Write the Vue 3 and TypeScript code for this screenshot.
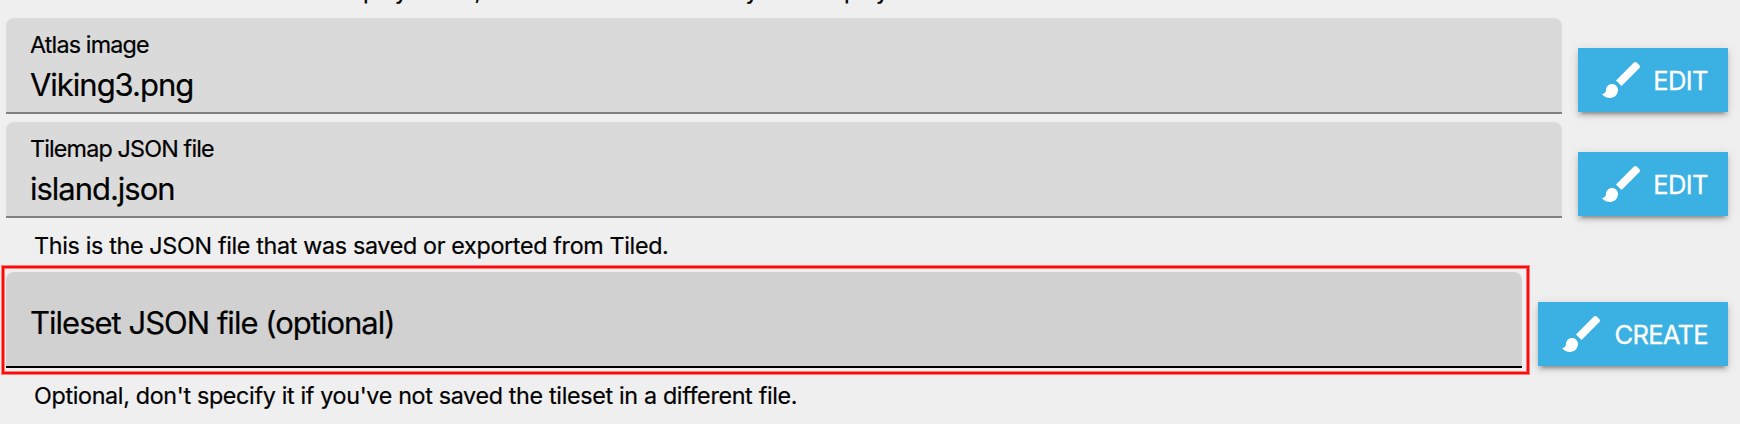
<script setup lang="ts">
interface Field {
  id: string
  label: string
  value: string
  helper: string
  action: string
}

const fields: Field[] = [
  { id: 'atlas', label: 'Atlas image', value: 'Viking3.png', helper: '', action: 'EDIT' },
  {
    id: 'tilemap',
    label: 'Tilemap JSON file',
    value: 'island.json',
    helper: 'This is the JSON file that was saved or exported from Tiled.',
    action: 'EDIT',
  },
  {
    id: 'tileset',
    label: 'Tileset JSON file (optional)',
    value: '',
    helper: "Optional, don't specify it if you've not saved the tileset in a different file.",
    action: 'CREATE',
  },
]
</script>

<template>
  <main class="panel">
    <p class="intro"><span>If "index" is selected as the display mode, this is the index of the layer to display.</span></p>
    <section v-for="f in fields" :key="f.id" class="group" :class="f.id">
      <div class="row">
        <div class="field" :class="{ empty: !f.value }">
          <template v-if="f.value">
            <div class="label">{{ f.label }}</div>
            <div class="value">{{ f.value }}</div>
          </template>
          <div v-else class="placeholder">{{ f.label }}</div>
        </div>
        <button class="action" type="button">
          <svg class="icon" viewBox="0 0 24 24" aria-hidden="true">
            <path d="M7 14c-1.66 0-3 1.34-3 3 0 1.31-1.16 2-2 2 .92 1.22 2.49 2 4 2 2.21 0 4-1.79 4-4 0-1.66-1.34-3-3-3zm13.71-9.37l-1.34-1.34c-.39-.39-1.02-.39-1.41 0L9 12.25 11.75 15l8.96-8.96c.39-.39.39-1.02 0-1.41z" />
          </svg>
          <span class="caption">{{ f.action }}</span>
        </button>
      </div>
      <p v-if="f.helper" class="helper">{{ f.helper }}</p>
    </section>
  </main>
</template>

<style>
body {
  margin: 0;
  background: #efefef;
}
</style>

<style scoped>
.panel {
  display: flex;
  flex-direction: column;
  box-sizing: border-box;
  width: 1740px;
  height: 424px;
  overflow: hidden;
  padding: 0 12px 0 6px;
  background: #efefef;
  color: #000;
  font-family: Inter, "Liberation Sans", sans-serif;
  -webkit-text-stroke: 0.2px currentColor;
}
p {
  margin: 0;
}
.intro {
  display: flex;
  align-items: flex-end;
  flex: none;
  box-sizing: border-box;
  height: 18px;
  padding: 0 0 12px 28px;
  font-size: 23.3px;
  line-height: 30px;
  letter-spacing: -0.32px;
  white-space: nowrap;
}
.row {
  display: flex;
  align-items: flex-start;
  gap: 16px;
}
.atlas {
  margin-bottom: 8px;
}
.field {
  box-sizing: border-box;
  flex: 1;
  height: 96px;
  padding: 12px 24px 0;
  background: #dadada;
  border-bottom: 2px solid #808080;
  border-radius: 8px 8px 0 0;
  white-space: nowrap;
}
.label {
  font-size: 23.3px;
  line-height: 30px;
  letter-spacing: -0.83px;
}
.value,
.placeholder {
  font-size: 31px;
  line-height: 40px;
  letter-spacing: -1.02px;
}
.value {
  margin-top: 5px;
}
.placeholder {
  letter-spacing: -0.99px;
}
.field.empty {
  position: relative;
  padding-top: 31px;
  background: #d1d1d1;
  border-bottom-color: #000;
}
.field.empty::before,
.field.empty::after {
  content: "";
  position: absolute;
  border: 4px solid rgba(255, 10, 10, 0.5);
  inset: -7px -8px -9px -5px;
}
.field.empty::after {
  border: 2px solid #ff0a0a;
  inset: -6px -7px -8px -4px;
}
.action {
  display: flex;
  align-items: center;
  justify-content: space-between;
  box-sizing: border-box;
  width: 150px;
  height: 64px;
  margin: 30px 0 0;
  padding: 0 20px;
  border: 0;
  background: #3ab1e2;
  color: #fff;
  box-shadow: 0 6px 2px -4px rgba(0, 0, 0, 0.2), 0 4px 4px rgba(0, 0, 0, 0.14), 0 2px 10px rgba(0, 0, 0, 0.12);
  font-family: inherit;
  font-size: 25.6px;
  line-height: 40px;
  letter-spacing: -0.6px;
  -webkit-text-stroke: 0.3px currentColor;
}
.tileset .action {
  width: 190px;
  letter-spacing: -0.75px;
}
.caption {
  padding-top: 1px;
}
.icon {
  width: 48px;
  height: 48px;
  fill: currentColor;
}
.helper {
  height: 54px;
  padding: 12px 0 0 28px;
  box-sizing: border-box;
  font-size: 23.3px;
  line-height: 32px;
  letter-spacing: -0.33px;
  white-space: nowrap;
}
</style>
